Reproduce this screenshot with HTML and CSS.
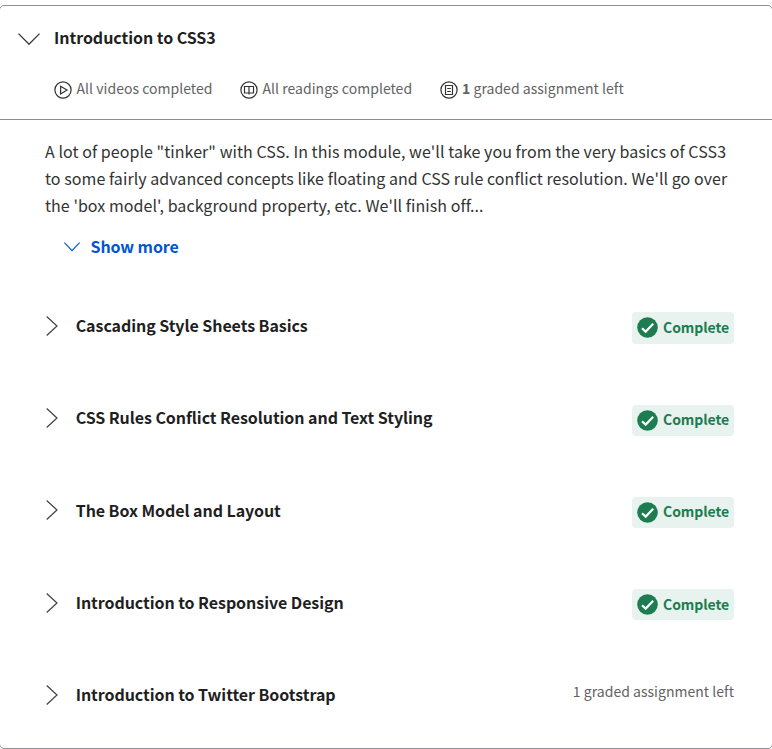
FILE: index.html
```html
<!DOCTYPE html>
<html lang="en">
<head>
<meta charset="utf-8">
<title>Introduction to CSS3</title>
<link rel="stylesheet" href="styles.css">
</head>
<body>
<svg class="defs" width="0" height="0" aria-hidden="true">
  <symbol id="chevron" viewBox="0 0 12 20"><path d="M.7.5 11 10 .7 19.500" fill="none" stroke="currentColor" stroke-width="1.25"/></symbol>
  <symbol id="check" viewBox="0 0 21 21"><circle cx="10.500" cy="10.500" r="10.300" fill="#1d7c50"/><path d="M5 11.200 8.700 14.600 16.200 6.800" fill="none" stroke="#fff" stroke-width="2.200"/></symbol>
</svg>
<main class="module">
  <header class="module-head">
    <div class="title-row">
      <svg class="fold" viewBox="0 0 22 12"><path d="M.5.6 11 11.200 21.500.6" fill="none" stroke="#333" stroke-width="1.3"/></svg>
      <h1>Introduction to CSS3</h1>
    </div>
    <div class="stats">
      <span class="stat videos"><svg viewBox="0 0 18 18"><g fill="none" stroke="#333" stroke-width="1.2"><circle cx="9" cy="9" r="8.100"/><path d="M6.600 5.300v7.600L13 9.100z"/></g></svg><span>All videos completed</span></span>
      <span class="stat readings"><svg viewBox="0 0 18 18"><g fill="none" stroke="#333" stroke-width="1.2"><circle cx="9" cy="9" r="8.100"/><path d="M4.500 5.500h9v6.500h-9zM9 5.500v8"/></g></svg><span>All readings completed</span></span>
      <span class="stat graded"><svg viewBox="0 0 18 18"><g fill="none" stroke="#333" stroke-width="1.2"><circle cx="9" cy="9" r="8.100"/><path d="M5.500 4.500h7v9h-7zM7.200 7.500h3.600M7.200 10.500h3.600"/></g></svg><span><b>1</b> graded assignment left</span></span>
    </div>
  </header>
  <section class="about">
    <p>A lot of people "tinker" with CSS. In this module, we'll take you from the very basics of CSS3<br>to some fairly advanced concepts like floating and CSS rule conflict resolution. We'll go over<br>the 'box model', background property, etc. We'll finish off...</p>
    <a class="more"><svg viewBox="0 0 16 10"><path d="M.4.6 8 8.700 15.600.6" fill="none" stroke="#0056d2" stroke-width="1.2"/></svg><span>Show more</span></a>
  </section>
  <ul class="lessons">
    <li><svg class="arrow"><use href="#chevron"/></svg><h2>Cascading Style Sheets Basics</h2><span class="badge"><svg><use href="#check"/></svg><span>Complete</span></span></li>
    <li><svg class="arrow"><use href="#chevron"/></svg><h2>CSS Rules Conflict Resolution and Text Styling</h2><span class="badge"><svg><use href="#check"/></svg><span>Complete</span></span></li>
    <li><svg class="arrow"><use href="#chevron"/></svg><h2>The Box Model and Layout</h2><span class="badge"><svg><use href="#check"/></svg><span>Complete</span></span></li>
    <li><svg class="arrow"><use href="#chevron"/></svg><h2>Introduction to Responsive Design</h2><span class="badge"><svg><use href="#check"/></svg><span>Complete</span></span></li>
    <li><svg class="arrow"><use href="#chevron"/></svg><h2>Introduction to Twitter Bootstrap</h2><span class="left">1 graded assignment left</span></li>
  </ul>
</main>
</body>
</html>
```
FILE: styles.css
```css
* { box-sizing: border-box; }
body { margin: 0; height: 749px; overflow: hidden; background: #fff; color: #1f1f1f; font-family: "Noto Sans CJK SC", "Open Sans", sans-serif; font-size: 16px; }
h1, h2, p, ul { margin: 0; padding: 0; }
svg { display: block; flex: none; }
.defs { position: absolute; }
.module { margin: 5px -1px 0; height: 744px; border: 1px solid #8f8f95; border-radius: 5px; white-space: nowrap; }
.module-head { height: 114px; border-bottom: 1px solid #8c8c8c; padding-top: 17px; }
.title-row { display: flex; align-items: center; height: 28px; padding-left: 18px; }
.fold { width: 22px; height: 12px; margin-top: 4px; }
h1 { margin-left: 14px; font-size: 16px; line-height: 28px; font-weight: 700; letter-spacing: -.04px; }
.stats { display: flex; align-items: center; margin-top: 25px; padding-left: 54px; height: 24px; color: #636363; font-size: 14px; line-height: 24px; letter-spacing: .03px; }
.stat { display: flex; align-items: center; gap: 4.5px; }
.stat svg { width: 18px; height: 18px; margin-top: 4px; }
.videos { width: 186px; }
.readings { width: 200px; }
.graded { gap: 4px; }
.about { padding: 18px 0 0 45px; color: #333; }
.about p { font-size: 16px; line-height: 27px; letter-spacing: .055px; }
.more { display: flex; align-items: center; margin: 14px 0 0 19px; height: 27px; color: #0056d2; font-weight: 700; line-height: 27px; letter-spacing: -.1px; }
.more svg { width: 16px; height: 10px; margin-right: 10.5px; }
.lessons { list-style: none; margin-top: 20px; padding: 0 38px 0 46px; }
.lessons li { display: flex; align-items: center; height: 92.2px; }
.arrow { width: 12px; height: 20px; color: #444; margin-right: 17.7px; }
h2 { margin-top: -1.6px; font-size: 16px; line-height: 28px; font-weight: 700; letter-spacing: -.06px; }
.badge { display: flex; align-items: center; gap: 5px; width: 102px; height: 31.2px; margin: 3.8px 0 0 auto; padding-left: 5px; border-radius: 4px; background: #e8f2ee; color: #1d7c50; font-size: 14px; font-weight: 700; line-height: 30px; letter-spacing: -.05px; }
.badge span { margin-top: -1.8px; }
.badge svg { width: 21px; height: 21px; }
.left { margin: -8px 0 0 auto; color: #636363; font-size: 14px; letter-spacing: .03px; }
```
